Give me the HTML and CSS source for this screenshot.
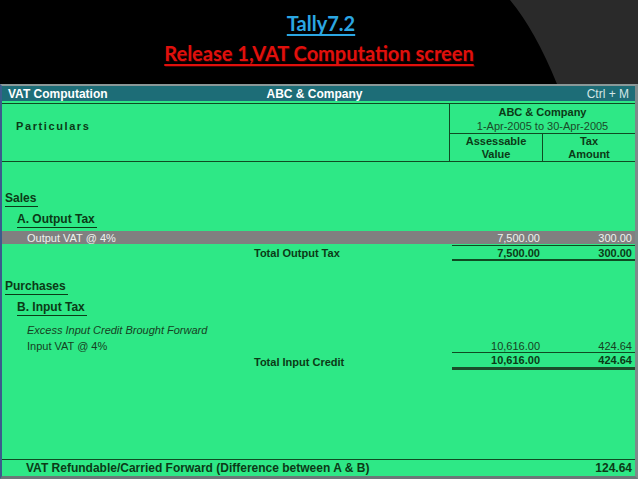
FILE: index.html
```html
<!DOCTYPE html>
<html>
<head>
<meta charset="utf-8">
<link rel="stylesheet" href="styles.css">
</head>
<body>
<div class="slide-head">
  <svg class="deco" width="638" height="84" viewBox="0 0 638 84"><path d="M510 0 L638 0 L638 84 L557 84 Q535 30 510 0 Z" fill="#2a2a2a"/></svg>
  <div class="t1">Tally7.2</div>
  <div class="t2">Release 1,VAT Computation screen</div>
</div>
<div class="screen">
  <div class="titlebar">
    <span class="tb-left">VAT Computation</span>
    <span class="tb-mid">ABC &amp; Company</span>
    <span class="tb-right">Ctrl + M</span>
  </div>
  <div class="colhead">
    <div class="ch-part">Particulars</div>
    <div class="ch-right">
      <div class="ch-co"><b>ABC &amp; Company</b><span>1-Apr-2005 to 30-Apr-2005</span></div>
      <div class="ch-cols">
        <div class="ch-col">Assessable<br>Value</div>
        <div class="ch-col ch-col2">Tax<br>Amount</div>
      </div>
    </div>
  </div>
  <div class="body">
    <div class="row grp g1"><span class="ul">Sales</span></div>
    <div class="row sub g2"><span class="ul">A. Output Tax</span></div>
    <div class="row item hl"><span class="p">Output VAT @ 4%</span><span class="v">7,500.00</span><span class="v v2">300.00</span></div>
    <div class="row total t-out"><span class="p">Total Output Tax</span><span class="v">7,500.00</span><span class="v v2">300.00</span></div>
    <div class="row grp g3"><span class="ul">Purchases</span></div>
    <div class="row sub g2"><span class="ul">B. Input Tax</span></div>
    <div class="row item it g4"><span class="p">Excess Input Credit Brought Forward</span></div>
    <div class="row item ln"><span class="p">Input VAT @ 4%</span><span class="v">10,616.00</span><span class="v v2">424.64</span></div>
    <div class="row total t-in"><span class="p">Total Input Credit</span><span class="v">10,616.00</span><span class="v v2">424.64</span></div>
    <div class="fill"></div>
    <div class="row foot"><span class="p">VAT Refundable/Carried Forward (Difference between A &amp; B)</span><span class="v"></span><span class="v v2">124.64</span></div>
  </div>
</div>
</body>
</html>
```
FILE: styles.css
```css
html, body {
  margin: 0;
  padding: 0;
  background: #000;
}
body {
  width: 638px;
  height: 479px;
  overflow: hidden;
  font-family: "Liberation Sans", Arial, sans-serif;
}
.slide-head {
  position: relative;
  height: 84px;
  text-align: center;
  font-family: Lato, "Open Sans", sans-serif;
  font-size: 20px;
  font-weight: bold;
  line-height: 30px;
}
.deco {
  position: absolute;
  left: 0;
  top: 0;
}
.t1, .t2 {
  position: relative;
  text-decoration: underline;
  text-decoration-thickness: 2px;
  text-underline-offset: 3px;
}
.t1 {
  color: #2ba6e2;
  padding-top: 8px;
  padding-left: 4px;
}
.t2 {
  color: #e0100c;
  text-shadow: 1px 1px 1px #400;
}
.screen {
  height: 390px;
  background: #2ee886;
  border-top: 2px solid #8a9898;
  border-left: 2px solid #3b5c8c;
  border-right: 3px solid #7d8a8a;
  border-bottom: 3px solid #6a7878;
  display: flex;
  flex-direction: column;
  color: #0b3a16;
  font-size: 11px;
}
.titlebar {
  height: 15px;
  background: #1d6d77;
  color: #fff;
  display: flex;
  align-items: center;
  font-size: 12px;
  padding: 0 6px;
}
.tb-left { font-weight: bold; flex: 1; }
.tb-mid { font-weight: bold; flex: 1; text-align: center; padding-right: 8px; }
.tb-right { flex: 1; text-align: right; color: #d4e6e6; }
.colhead {
  margin-top: 2px;
  border-top: 1px solid #0f4a22;
  border-bottom: 1px solid #0f4a22;
  height: 57px;
  display: flex;
}
.ch-part {
  width: 436px;
  padding: 16px 0 0 14px;
  font-weight: bold;
  letter-spacing: 1.6px;
  font-size: 11px;
}
.ch-right {
  flex: 1;
  border-left: 1px solid #0f4a22;
  display: flex;
  flex-direction: column;
}
.ch-co {
  height: 30px;
  border-bottom: 1px solid #0f4a22;
  display: flex;
  flex-direction: column;
  align-items: center;
  justify-content: center;
  line-height: 14px;
  padding-top: 1px;
  box-sizing: border-box;
}
.ch-co span { color: #1a4a28; }
.ch-cols {
  flex: 1;
  display: flex;
}
.ch-col {
  width: 92px;
  text-align: center;
  font-weight: bold;
  line-height: 13px;
  padding-top: 1px;
}
.ch-col2 {
  flex: 1;
  border-left: 1px solid #0f4a22;
}
.body {
  flex: 1;
  display: flex;
  flex-direction: column;
}
.row {
  display: grid;
  grid-template-columns: 450px 92px 1fr;
  align-items: center;
}
.row .v {
  text-align: right;
  padding-right: 4px;
}
.row .v2 { padding-right: 3px; }
.grp, .sub {
  font-weight: bold;
  font-size: 12px;
  height: 17px;
}
.ul {
  border-bottom: 1px solid #0b3a16;
  padding: 0 2px 1px 0;
  justify-self: start;
}
.grp { padding-left: 3px; }
.sub { padding-left: 15px; }
.g1 { margin-top: 28px; }
.g2 { margin-top: 4px; }
.g3 { margin-top: 17px; }
.g4 { margin-top: 6px; }
.item .p { padding-left: 25px; }
.hl {
  margin-top: 3px;
  height: 13px;
  background: #808080;
  color: #eef2ee;
}
.total {
  font-weight: bold;
  height: 14px;
}
.total .p { padding-left: 252px; }
.t-out .v {
  border-top: 1px solid #0f4a22;
  border-bottom: 2px solid #0f4a22;
  line-height: 12px;
  padding-top: 1px;
}
.t-out { margin-top: 1px; height: 16px; }
.it {
  font-style: italic;
  height: 16px;
  color: #163f22;
}
.ln {
  height: 15px;
  color: #163f22;
}
.ln .v {
  align-self: end;
  border-bottom: 1px solid #0f4a22;
}
.t-in .v {
  border-bottom: 3px solid #1a4d2a;
  line-height: 13px;
}
.t-in { height: 16px; margin-top: 1px; }
.fill { flex: 1; }
.foot {
  border-top: 1px solid #0f4a22;
  height: 16px;
  font-weight: bold;
  font-size: 12px;
}
.foot .p { padding-left: 24px; white-space: nowrap; }
```
